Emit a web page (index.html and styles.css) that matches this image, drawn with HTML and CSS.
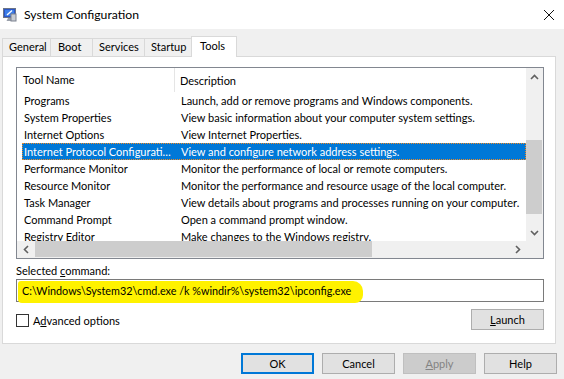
FILE: index.html
```html
<!DOCTYPE html>
<html lang="en">
<head>
  <meta charset="UTF-8">
  <title>System Configuration</title>
  <link rel="stylesheet" href="styles.css">
</head>
<body>
  <div class="window">
    <div class="titlebar">
      <svg class="app-icon" width="16" height="16" viewBox="0 0 16 16">
        <rect x="1.5" y="1.5" width="12" height="9" fill="#2a56c8" stroke="#6a7488"/>
        <rect x="3" y="3" width="9" height="6" fill="#3d7ee8"/>
        <path d="M5 8 L10 3.5" stroke="#fff" stroke-width="1.4"/>
        <path d="M6 11 L9 11 L10.5 14 L4.5 14 Z" fill="#9aa0aa"/>
        <rect x="9" y="7" width="5" height="7" fill="#c8ccd2" stroke="#7c8290"/>
      </svg>
      <span class="title">System Configuration</span>
      <svg class="close" width="12" height="12" viewBox="0 0 12 12">
        <path d="M1 1 L11 11 M11 1 L1 11" stroke="#111" stroke-width="1"/>
      </svg>
    </div>

    <div class="tabs">
      <div class="tab tab-general">General</div>
      <div class="tab tab-boot">Boot</div>
      <div class="tab tab-services">Services</div>
      <div class="tab tab-startup">Startup</div>
      <div class="tab tab-tools active">Tools</div>
    </div>

    <div class="panel">
      <div class="list">
        <div class="list-view">
          <div class="list-head">
            <div class="col-name">Tool Name</div>
            <div class="col-desc">Description</div>
          </div>
          <div class="row">
            <div class="col-name">Programs</div>
            <div class="col-desc">Launch, add or remove programs and Windows components.</div>
          </div>
          <div class="row">
            <div class="col-name">System Properties</div>
            <div class="col-desc">View basic information about your computer system settings.</div>
          </div>
          <div class="row">
            <div class="col-name">Internet Options</div>
            <div class="col-desc">View Internet Properties.</div>
          </div>
          <div class="row selected">
            <div class="col-name">Internet Protocol Configuration</div>
            <div class="col-desc">View and configure network address settings.</div>
          </div>
          <div class="row">
            <div class="col-name">Performance Monitor</div>
            <div class="col-desc">Monitor the performance of local or remote computers.</div>
          </div>
          <div class="row">
            <div class="col-name">Resource Monitor</div>
            <div class="col-desc">Monitor the performance and resource usage of the local computer.</div>
          </div>
          <div class="row">
            <div class="col-name">Task Manager</div>
            <div class="col-desc">View details about programs and processes running on your computer.</div>
          </div>
          <div class="row">
            <div class="col-name">Command Prompt</div>
            <div class="col-desc">Open a command prompt window.</div>
          </div>
          <div class="row">
            <div class="col-name">Registry Editor</div>
            <div class="col-desc">Make changes to the Windows registry.</div>
          </div>
        </div>

        <div class="vscroll">
          <div class="sb-btn">
            <svg width="9" height="6" viewBox="0 0 9 6"><path d="M1 5 L4.5 1.5 L8 5" fill="none" stroke="#606060" stroke-width="1.6"/></svg>
          </div>
          <div class="vtrack"><div class="vthumb"></div></div>
          <div class="sb-btn">
            <svg width="9" height="6" viewBox="0 0 9 6"><path d="M1 1 L4.5 4.5 L8 1" fill="none" stroke="#606060" stroke-width="1.6"/></svg>
          </div>
        </div>

        <div class="hscroll">
          <div class="sb-btn">
            <svg width="6" height="9" viewBox="0 0 6 9"><path d="M5 1 L1.5 4.5 L5 8" fill="none" stroke="#606060" stroke-width="1.6"/></svg>
          </div>
          <div class="htrack"><div class="hthumb"></div></div>
          <div class="sb-btn">
            <svg width="6" height="9" viewBox="0 0 6 9"><path d="M1 1 L4.5 4.5 L1 8" fill="none" stroke="#606060" stroke-width="1.6"/></svg>
          </div>
        </div>
        <div class="corner"></div>
      </div>

      <div class="cmd-label">Selected <u>c</u>ommand:</div>
      <div class="cmd-box">
        <span class="marker">C:\Windows\System32\cmd.exe /k %windir%\system32\ipconfig.exe</span>
      </div>

      <div class="options">
        <label class="check">
          <span class="check-box"></span>
          <span>A<u>d</u>vanced options</span>
        </label>
        <button class="btn"><u>L</u>aunch</button>
      </div>
    </div>

    <div class="footer">
      <button class="btn btn-default">OK</button>
      <button class="btn">Cancel</button>
      <button class="btn btn-disabled"><u>A</u>pply</button>
      <button class="btn">Help</button>
    </div>
  </div>
</body>
</html>
```

FILE: styles.css
```css
* {
  box-sizing: border-box;
}

body {
  margin: 0;
  padding: 0;
  background-color: #f0f0f0;
  font-family: 'Lato', 'Noto Sans', sans-serif;
  font-size: 11px;
  color: #000;
}

.window {
  width: 564px;
  height: 379px;
  display: flex;
  flex-direction: column;
  overflow: hidden;
}

.titlebar {
  height: 29px;
  background: #fff;
  display: flex;
  align-items: center;
  padding-left: 2px;
  padding-right: 9px;
}

.app-icon {
  margin-right: 6px;
}

.title {
  flex: 1;
  font-size: 12.2px;
}

/* tabs */

.tabs {
  display: flex;
  align-items: flex-end;
  height: 20px;
  margin-top: 7px;
  padding-left: 2px;
}

.tab {
  height: 18px;
  line-height: 16px;
  padding-left: 5px;
  background: #f0f0f0;
  border: 1px solid #d9d9d9;
  border-bottom: none;
  margin-left: -1px;
  white-space: nowrap;
}

.tab-general { width: 49px; padding-left: 6px; margin-left: 0; }
.tab-boot { width: 43px; padding-left: 7px; }
.tab-services { width: 53px; padding-left: 6px; }
.tab-startup { width: 49px; padding-left: 6px; }

.tab.active {
  position: relative;
  width: 46px;
  height: 21px;
  line-height: 18px;
  padding-left: 8px;
  margin-left: -2px;
  margin-bottom: -1px;
  background: #fff;
}

.panel {
  width: 554px;
  height: 288px;
  margin-left: 2px;
  background: #fff;
  border: 1px solid #d9d9d9;
  padding: 10px 11px 0 13px;
  display: flex;
  flex-direction: column;
}

/* list view */

.list {
  width: 528px;
  height: 192px;
  border: 1px solid #828790;
  display: grid;
  grid-template-columns: 1fr 17px;
  grid-template-rows: 1fr 17px;
}

.list-view {
  overflow: hidden;
  padding-left: 5px;
}

.list-head {
  height: 24px;
  display: flex;
  align-items: center;
}

.list-head .col-name {
  border-right: 1px solid #e5e5e5;
  height: 24px;
  line-height: 24px;
}

.col-name {
  width: 153px;
  padding-left: 1px;
  white-space: nowrap;
  overflow: hidden;
  text-overflow: ellipsis;
}

.col-desc {
  flex: 1;
  padding-left: 5px;
  white-space: nowrap;
  overflow: hidden;
}

.row {
  height: 17px;
  line-height: 15px;
  display: flex;
  border: 1px solid transparent;
}

.row .col-name {
  width: 153px;
  padding-right: 2px;
}

.row.selected {
  background: #0078d7;
  color: #fff;
  border: 1px dotted #f08a24;
}

.vscroll {
  background: #f0f0f0;
  display: flex;
  flex-direction: column;
}

.hscroll {
  background: #f0f0f0;
  display: flex;
}

.corner {
  background: #f0f0f0;
}

.sb-btn {
  width: 17px;
  height: 17px;
  display: flex;
  align-items: center;
  justify-content: center;
  flex-shrink: 0;
}

.vtrack {
  flex: 1;
  padding: 55px 1px 10px 0;
}

.vthumb {
  height: 74px;
  background: #cdcdcd;
}

.htrack {
  flex: 1;
  padding: 0 137px 0 1px;
}

.hthumb {
  height: 17px;
  background: #cdcdcd;
  border-bottom: 1px solid #f0f0f0;
}

/* command */

.cmd-label {
  margin-top: 4px;
  line-height: 15px;
}

.cmd-box {
  width: 528px;
  height: 23px;
  margin-top: 1px;
  border: 1px solid #7a7a7a;
  display: flex;
  align-items: center;
  padding-left: 1px;
}

.marker {
  width: 345px;
  height: 22px;
  line-height: 20px;
  padding-left: 4px;
  font-size: 10.8px;
  background: #fff200;
  border-radius: 3px 10px 8px 4px;
  white-space: nowrap;
  margin-top: 2px;
  overflow: hidden;
}

.options {
  display: flex;
  justify-content: space-between;
  align-items: flex-start;
  width: 528px;
  margin-top: 7px;
}

.check {
  display: flex;
  align-items: center;
  gap: 4px;
  margin-top: 5px;
}

.check-box {
  width: 13px;
  height: 13px;
  border: 1px solid #333;
  background: #fff;
}

.btn {
  width: 73px;
  height: 21px;
  padding: 0;
  background: #e1e1e1;
  border: 1px solid #adadad;
  font-family: inherit;
  font-size: 11px;
  color: #000;
}

.btn-default {
  border: 2px solid #0078d7;
}

.btn-disabled {
  background: #cccccc;
  border-color: #bfbfbf;
  color: #838383;
}

.footer {
  display: flex;
  justify-content: flex-end;
  gap: 8px;
  margin-top: 9px;
  padding-right: 7px;
}
```
